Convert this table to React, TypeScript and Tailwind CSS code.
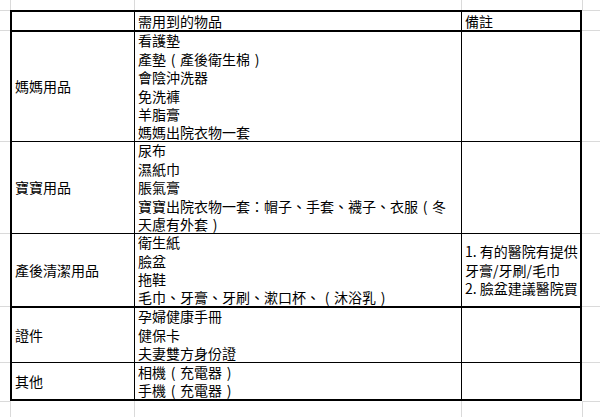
const grid = "border-[#dadada]";

type Row = {
  label: string;
  items: string[];
  note: string[];
  top: string;
  last?: boolean;
};

const rows: Row[] = [
  {
    label: "媽媽用品",
    items: ["看護墊", "產墊（產後衛生棉）", "會陰沖洗器", "免洗褲", "羊脂膏", "媽媽出院衣物一套"],
    note: [],
    top: "border-t-2",
  },
  {
    label: "寶寶用品",
    items: ["尿布", "濕紙巾", "脹氣膏", "寶寶出院衣物一套：帽子、手套、襪子、衣服（冬", "天慮有外套）"],
    note: [],
    top: "border-t",
  },
  {
    label: "產後清潔用品",
    items: ["衛生紙", "臉盆", "拖鞋", "毛巾、牙膏、牙刷、漱口杯、（沐浴乳）"],
    note: ["1. 有的醫院有提供", "牙膏/牙刷/毛巾", "2. 臉盆建議醫院買"],
    top: "border-t",
  },
  {
    label: "證件",
    items: ["孕婦健康手冊", "健保卡", "夫妻雙方身份證"],
    note: [],
    top: "border-t-2",
  },
  {
    label: "其他",
    items: ["相機（充電器）", "手機（充電器）"],
    note: [],
    top: "border-t",
    last: true,
  },
];

// full-width brackets sit in the middle of their cell in the sheet's font
function Text({ s }: { s: string }) {
  return (
    <>
      {s.split(/([（）])/).map((part, i) =>
        part === "（" || part === "）" ? (
          <span key={i} className="inline-block w-[14px] text-center">
            {part === "（" ? "(" : ")"}
          </span>
        ) : (
          <span key={i}>{part}</span>
        )
      )}
    </>
  );
}

function Lines({ lines }: { lines: string[] }) {
  return (
    <>
      {lines.map((l) => (
        <div key={l} className="whitespace-nowrap">
          <Text s={l} />
        </div>
      ))}
    </>
  );
}

export default function App() {
  return (
    <div className="w-[600px] h-[417px] bg-white overflow-hidden text-black text-[14px] leading-[18.4px] font-['Noto_Sans_CJK_TC','Noto_Sans_CJK_SC',sans-serif]">
      <div className="grid grid-cols-[10px_124px_327px_121px_18px] grid-rows-[10px_20px_111px_92px_73px_56px_39px_16px] h-full">
        {/* top margin of the sheet */}
        <div />
        <div className={`border-l ${grid}`} />
        <div className={`border-l ${grid}`} />
        <div className={`border-l ${grid}`} />
        <div className={`border-l ${grid}`} />

        {/* header */}
        <div className={`border-t ${grid}`} />
        <div className="border-l-2 border-t-2 border-black" />
        <div className="border-l border-t-2 border-black pl-[3px] flex items-center">需用到的物品</div>
        <div className="border-l border-t-2 border-r-2 border-black pl-[3px] flex items-center">備註</div>
        <div className={`border-t ${grid}`} />

        {rows.map((r) => (
          <div key={r.label} className="contents">
            <div className={`border-t ${grid}`} />
            <div
              className={`border-l-2 ${r.top} ${r.last ? "border-b-2" : ""} border-black pl-[3px] flex items-center whitespace-nowrap`}
            >
              {r.label}
            </div>
            <div
              className={`border-l ${r.top} ${r.last ? "border-b-2" : ""} border-black pl-[3px] flex flex-col justify-center`}
            >
              <Lines lines={r.items} />
            </div>
            <div
              className={`border-l border-r-2 ${r.top} ${r.last ? "border-b-2" : ""} border-black pl-[3px] flex flex-col justify-center`}
            >
              <Lines lines={r.note} />
            </div>
            <div className={`border-t ${grid}`} />
          </div>
        ))}

        {/* bottom margin of the sheet */}
        <div className={`border-t ${grid}`} />
        <div className={`border-l ${grid}`} />
        <div className={`border-l ${grid}`} />
        <div className={`border-l ${grid}`} />
        <div className={`border-l border-t ${grid}`} />
      </div>
    </div>
  );
}
